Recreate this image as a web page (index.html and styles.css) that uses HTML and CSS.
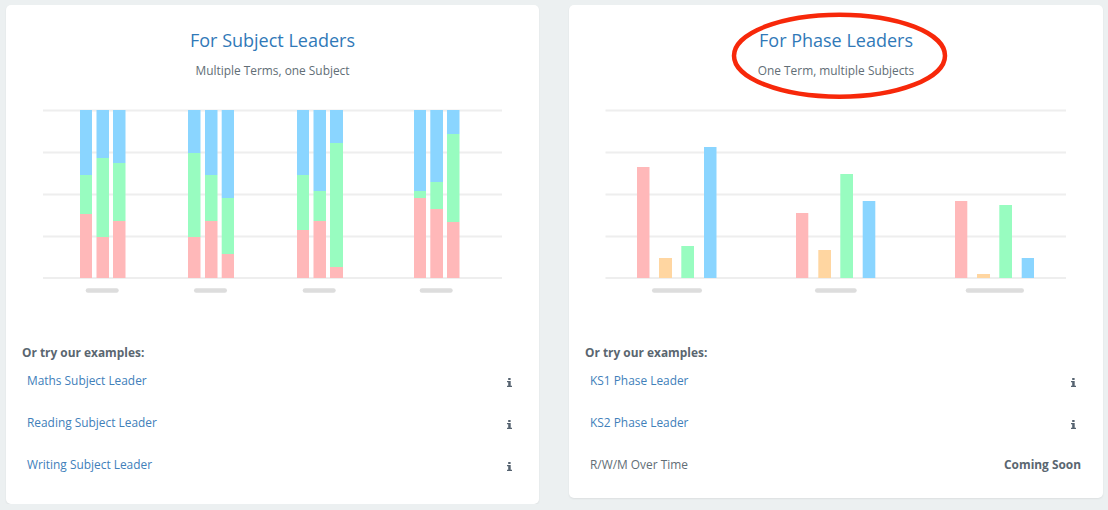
FILE: index.html
```html
<!DOCTYPE html>
<html lang="en">
<head>
  <meta charset="UTF-8">
  <meta name="viewport" content="width=device-width, initial-scale=1.0">
  <title>For Subject and Phase Leaders</title>
  <link rel="stylesheet" href="styles.css">
</head>
<body>
  <svg width="0" height="0" class="defs">
    <symbol id="info" viewBox="0 0 5 9">
      <path d="M1.2 0h2.4v2H1.2zM0 3h3.7v4.8H5V9H0V7.8h1.2V4.2H0z"/>
    </symbol>
  </svg>

  <div class="page">
    <div class="card card-subject">
      <div class="card-head">
        <h2>For Subject Leaders</h2>
        <p>Multiple Terms, one Subject</p>
      </div>

      <svg class="chart" width="533" height="200" viewBox="6 100 533 200">
        <g class="grid">
          <rect x="43" y="109.5" width="459" height="2"/>
          <rect x="43" y="151.5" width="459" height="2"/>
          <rect x="43" y="193.5" width="459" height="2"/>
          <rect x="43" y="235.5" width="459" height="2"/>
          <rect x="43" y="277" width="459" height="2"/>
        </g>
        <rect class="blue" x="80" y="110" width="12" height="65"/>
        <rect class="green" x="80" y="175" width="12" height="39"/>
        <rect class="red" x="80" y="214" width="12" height="64"/>
        <rect class="blue" x="96.5" y="110" width="12.5" height="48"/>
        <rect class="green" x="96.5" y="158" width="12.5" height="79"/>
        <rect class="red" x="96.5" y="237" width="12.5" height="41"/>
        <rect class="blue" x="113" y="110" width="12.5" height="53"/>
        <rect class="green" x="113" y="163" width="12.5" height="58"/>
        <rect class="red" x="113" y="221" width="12.5" height="57"/>

        <rect class="blue" x="188" y="110" width="12.5" height="43"/>
        <rect class="green" x="188" y="153" width="12.5" height="84"/>
        <rect class="red" x="188" y="237" width="12.5" height="41"/>
        <rect class="blue" x="205" y="110" width="12.5" height="65"/>
        <rect class="green" x="205" y="175" width="12.5" height="46"/>
        <rect class="red" x="205" y="221" width="12.5" height="57"/>
        <rect class="blue" x="221.7" y="110" width="12.3" height="88"/>
        <rect class="green" x="221.7" y="198" width="12.3" height="56"/>
        <rect class="red" x="221.7" y="254" width="12.3" height="24"/>

        <rect class="blue" x="297" y="110" width="12" height="65"/>
        <rect class="green" x="297" y="175" width="12" height="55"/>
        <rect class="red" x="297" y="230" width="12" height="48"/>
        <rect class="blue" x="313.5" y="110" width="12.5" height="81"/>
        <rect class="green" x="313.5" y="191" width="12.5" height="30"/>
        <rect class="red" x="313.5" y="221" width="12.5" height="57"/>
        <rect class="blue" x="330" y="110" width="13" height="33"/>
        <rect class="green" x="330" y="143" width="13" height="124"/>
        <rect class="red" x="330" y="267" width="13" height="11"/>

        <rect class="blue" x="414" y="110" width="12" height="81"/>
        <rect class="green" x="414" y="191" width="12" height="7"/>
        <rect class="red" x="414" y="198" width="12" height="80"/>
        <rect class="blue" x="430.3" y="110" width="12.7" height="72"/>
        <rect class="green" x="430.3" y="182" width="12.7" height="27"/>
        <rect class="red" x="430.3" y="209" width="12.7" height="69"/>
        <rect class="blue" x="447" y="110" width="12.5" height="24"/>
        <rect class="green" x="447" y="134" width="12.5" height="88"/>
        <rect class="red" x="447" y="222" width="12.5" height="56"/>

        <rect class="pill" x="85.7" y="288.3" width="33" height="4.4" rx="2.2"/>
        <rect class="pill" x="194" y="288.3" width="33" height="4.4" rx="2.2"/>
        <rect class="pill" x="302.7" y="288.3" width="33" height="4.4" rx="2.2"/>
        <rect class="pill" x="419.7" y="288.3" width="33" height="4.4" rx="2.2"/>
      </svg>

      <div class="examples">
        <h4>Or try our examples:</h4>
        <ul>
          <li><a href="#">Maths Subject Leader</a><svg class="info"><use href="#info"/></svg></li>
          <li><a href="#">Reading Subject Leader</a><svg class="info"><use href="#info"/></svg></li>
          <li><a href="#">Writing Subject Leader</a><svg class="info"><use href="#info"/></svg></li>
        </ul>
      </div>
    </div>

    <div class="card card-phase">
      <div class="card-head">
        <h2>For Phase Leaders</h2>
        <p>One Term, multiple Subjects</p>
      </div>

      <svg class="chart" width="534" height="200" viewBox="569 100 534 200">
        <g class="grid">
          <rect x="605.5" y="109.5" width="460.5" height="2"/>
          <rect x="605.5" y="151.5" width="460.5" height="2"/>
          <rect x="605.5" y="193.5" width="460.5" height="2"/>
          <rect x="605.5" y="235.5" width="460.5" height="2"/>
          <rect x="605.5" y="277" width="460.5" height="2"/>
        </g>
        <rect class="red" x="637" y="167" width="12.5" height="111"/>
        <rect class="orange" x="659" y="258" width="13" height="20"/>
        <rect class="green" x="681.3" y="246" width="12.7" height="32"/>
        <rect class="blue" x="704" y="147" width="12.5" height="131"/>

        <rect class="red" x="796" y="213" width="12.3" height="65"/>
        <rect class="orange" x="818.3" y="250" width="12.7" height="28"/>
        <rect class="green" x="840.3" y="174" width="12.7" height="104"/>
        <rect class="blue" x="862.7" y="201" width="12.6" height="77"/>

        <rect class="red" x="955" y="201" width="12.3" height="77"/>
        <rect class="orange" x="977" y="274" width="13" height="4"/>
        <rect class="green" x="999.3" y="205" width="12.7" height="73"/>
        <rect class="blue" x="1021.7" y="258" width="12.3" height="20"/>

        <rect class="pill" x="652" y="288.3" width="50" height="4.4" rx="2.2"/>
        <rect class="pill" x="815" y="288.3" width="41.7" height="4.4" rx="2.2"/>
        <rect class="pill" x="965.7" y="288.3" width="58.3" height="4.4" rx="2.2"/>
      </svg>

      <div class="examples">
        <h4>Or try our examples:</h4>
        <ul>
          <li><a href="#">KS1 Phase Leader</a><svg class="info"><use href="#info"/></svg></li>
          <li><a href="#">KS2 Phase Leader</a><svg class="info"><use href="#info"/></svg></li>
          <li><span>R/W/M Over Time</span><strong>Coming Soon</strong></li>
        </ul>
      </div>

      <!-- red marker ring drawn over the heading -->
      <svg class="ring" width="219" height="90" viewBox="0 0 219 90">
        <ellipse cx="109.5" cy="44.7" rx="105.5" ry="41"/>
      </svg>
    </div>
  </div>
</body>
</html>
```

FILE: styles.css
```css
body {
  background-color: #ecf0f1;
  color: #626e76;
  font-family: 'Open Sans', sans-serif;
  font-size: 11.9px;
  margin: 0;
  padding: 0;
}
.defs {
  position: absolute;
}
.page {
  display: flex;
  align-items: flex-start;
  gap: 30px;
  padding: 5px 5px 0 6px;
}
.card {
  position: relative;
  background-color: #ffffff;
  border-radius: 5px;
  box-shadow: 0 1px 2px rgba(0, 0, 0, 0.07);
  flex: 0 0 auto;
}
.card-subject {
  width: 533px;
  padding-bottom: 31px;
}
.card-phase {
  width: 534px;
  padding-bottom: 25px;
}
.card-head {
  padding-top: 23px;
  text-align: center;
}
.card-head h2 {
  color: #3079b8;
  font-size: 18px;
  font-weight: 400;
  line-height: 24px;
  margin: 0;
}
.card-head p {
  font-size: 11.9px;
  line-height: 18px;
  margin: 9px 0 0;
}
.chart {
  display: block;
  margin-top: 21px;
}
.grid {
  fill: #eeeeee;
}
.blue {
  fill: #8ad5ff;
}
.green {
  fill: #98fcc0;
}
.red {
  fill: #ffb8b9;
}
.orange {
  fill: #ffd6a1;
}
.pill {
  fill: #dddddd;
}
.examples {
  margin-top: 43px;
  padding: 0 22px 0 16px;
}
.examples h4 {
  color: #5a6670;
  font-size: 11.9px;
  font-weight: 700;
  line-height: 18px;
  margin: 0;
}
.examples ul {
  list-style: none;
  margin: 10px 0 0;
  padding: 0 0 0 5px;
}
.examples li {
  display: flex;
  align-items: center;
  justify-content: space-between;
  line-height: 18px;
  margin-bottom: 24px;
}
.examples li:last-child {
  margin-bottom: 0;
}
.examples a {
  color: #4180ba;
  text-decoration: none;
}
.examples strong {
  color: #5a6670;
  font-weight: 700;
}
.info {
  fill: #566370;
  width: 5px;
  height: 9px;
  margin: 4px 5px 0 0;
}
.ring {
  position: absolute;
  left: 161px;
  top: 6px;
}
.ring ellipse {
  fill: none;
  stroke: #f7280a;
  stroke-width: 4.5px;
}
```
